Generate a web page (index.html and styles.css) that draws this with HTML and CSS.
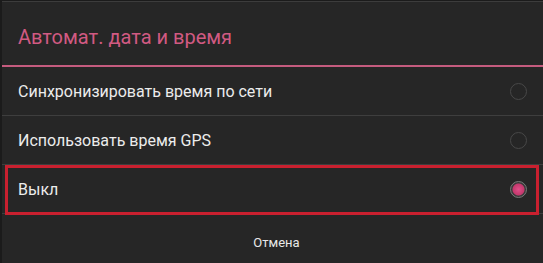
FILE: index.html
```
<!DOCTYPE html>
<html lang="ru">
<head>
    <meta charset="UTF-8">
    <title>Автомат. дата и время</title>
    <link rel="stylesheet" href="styles.css">
</head>
<body>
    <div class="dialog">
        <div class="title">Автомат. дата и время</div>
        <div class="list">
            <div class="row">
                <span class="label">Синхронизировать время по сети</span>
                <span class="radio"></span>
            </div>
            <div class="row">
                <span class="label">Использовать время GPS</span>
                <span class="radio"></span>
            </div>
            <div class="row marked">
                <span class="label">Выкл</span>
                <span class="radio checked"></span>
            </div>
        </div>
        <div class="buttons">
            <button class="btn">Отмена</button>
        </div>
    </div>
</body>
</html>
```

FILE: styles.css
```
body {
    margin: 0;
    background: #1b1b1b;
    font-family: Roboto, "Noto Sans", sans-serif;
    overflow: hidden;
}

.dialog {
    margin: 1px 0 0 2px;
    height: 262px;
    background: #262626;
    border-top: 1px solid #3c3c3c;
}

.title {
    height: 65px;
    padding-left: 16px;
    box-sizing: border-box;
    padding-top: 23px;
    font-size: 20px;
    color: #d15a82;
    border-bottom: 2px solid #c55b7e;
}

.row {
    position: relative;
    display: flex;
    align-items: center;
    justify-content: space-between;
    height: 48px;
    padding: 0 16px 0 16px;
    border-bottom: 1px solid #3e3e3e;
    color: #ececec;
    font-size: 16px;
}

.radio {
    width: 15px;
    height: 15px;
    border: 1.5px solid #484848;
    border-radius: 50%;
}

.radio.checked {
    border-color: #7a7a7a;
    background: radial-gradient(circle at 50% 50%, #e0508a 0, #c63a6f 5px, #c63a6f 5.5px, #3a3a3a 6.5px, #2c2c2c 100%);
}

.marked::after {
    content: "";
    position: absolute;
    left: 3px;
    right: 4px;
    top: 0;
    bottom: -2px;
    border: 3px solid #c9202f;
}

.buttons {
    display: flex;
    justify-content: center;
    padding-left: 8px;
    padding-top: 15px;
}

.btn {
    background: none;
    border: none;
    color: #e8e8e8;
    font-family: Roboto, "Noto Sans", sans-serif;
    font-size: 13px;
    padding: 6px 10px;
}
```
